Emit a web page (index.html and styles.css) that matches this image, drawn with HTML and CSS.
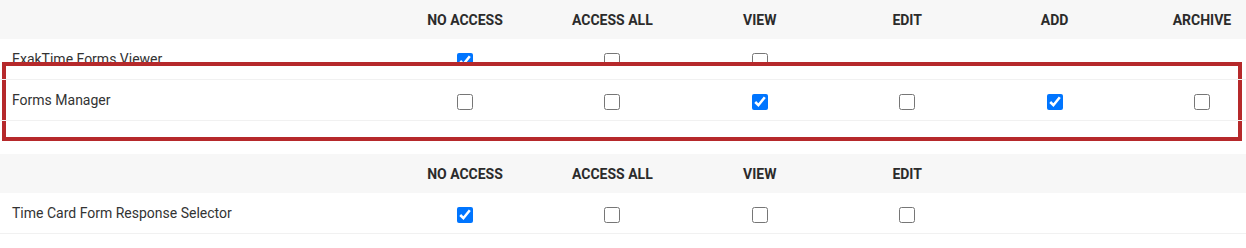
FILE: index.html
```html
<!DOCTYPE html>
<html>
<head>
<meta charset="utf-8">
<link rel="stylesheet" href="styles.css">
</head>
<body>
<div class="perm-table">
  <div class="row head">
    <div class="name"></div>
    <div class="col">NO ACCESS</div>
    <div class="col">ACCESS ALL</div>
    <div class="col">VIEW</div>
    <div class="col">EDIT</div>
    <div class="col">ADD</div>
    <div class="col">ARCHIVE</div>
  </div>
  <div class="row">
    <div class="name">ExakTime Forms Viewer</div>
    <div class="col"><input type="checkbox" checked></div>
    <div class="col"><input type="checkbox"></div>
    <div class="col"><input type="checkbox"></div>
    <div class="col"></div>
    <div class="col"></div>
    <div class="col"></div>
  </div>
  <div class="row highlighted">
    <div class="name">Forms Manager</div>
    <div class="col"><input type="checkbox"></div>
    <div class="col"><input type="checkbox"></div>
    <div class="col"><input type="checkbox" checked></div>
    <div class="col"><input type="checkbox"></div>
    <div class="col"><input type="checkbox" checked></div>
    <div class="col"><input type="checkbox"></div>
  </div>
  <div class="annotation"></div>
</div>

<div class="perm-table second">
  <div class="row head">
    <div class="name"></div>
    <div class="col">NO ACCESS</div>
    <div class="col">ACCESS ALL</div>
    <div class="col">VIEW</div>
    <div class="col">EDIT</div>
    <div class="col"></div>
    <div class="col"></div>
  </div>
  <div class="row">
    <div class="name">Time Card Form Response Selector</div>
    <div class="col"><input type="checkbox" checked></div>
    <div class="col"><input type="checkbox"></div>
    <div class="col"><input type="checkbox"></div>
    <div class="col"><input type="checkbox"></div>
    <div class="col"></div>
    <div class="col"></div>
  </div>
</div>
</body>
</html>
```

FILE: styles.css
```css
html, body {
  margin: 0;
  padding: 0;
  background: #ffffff;
  overflow: hidden;
}

body {
  font-family: Roboto, "Liberation Sans", Arial, sans-serif;
  font-size: 14px;
  color: #333333;
  width: 1246px;
}

.perm-table {
  position: relative;
  width: 1246px;
}

.perm-table.second {
  margin-top: 33px;
}

.row {
  display: grid;
  grid-template-columns: 391.3px repeat(6, 147.4px);
  align-items: center;
  height: 40px;
  border-bottom: 1px solid #f1f1f1;
  background: #ffffff;
  width: 1300px;
}

.row.head {
  height: 39px;
  background: #f7f7f7;
  border-bottom: none;
  font-weight: 700;
  color: #2b2b2b;
}

.name {
  padding-left: 12px;
  white-space: nowrap;
}

.col {
  display: flex;
  justify-content: center;
  align-items: center;
  padding-top: 3px;
  white-space: nowrap;
}

.row.head .col {
  padding-top: 0;
}

.row.highlighted {
  position: relative;
  z-index: 2;
  background: transparent;
  box-shadow: 0 -1px 0 #f1f1f1;
}

input[type="checkbox"] {
  width: 16px;
  height: 16px;
  margin: 0;
}

.annotation {
  position: absolute;
  left: 2px;
  top: 62px;
  width: 1240px;
  height: 79px;
  box-sizing: border-box;
  border: 4px solid #b6292b;
  background: #ffffff;
  z-index: 1;
}
```
